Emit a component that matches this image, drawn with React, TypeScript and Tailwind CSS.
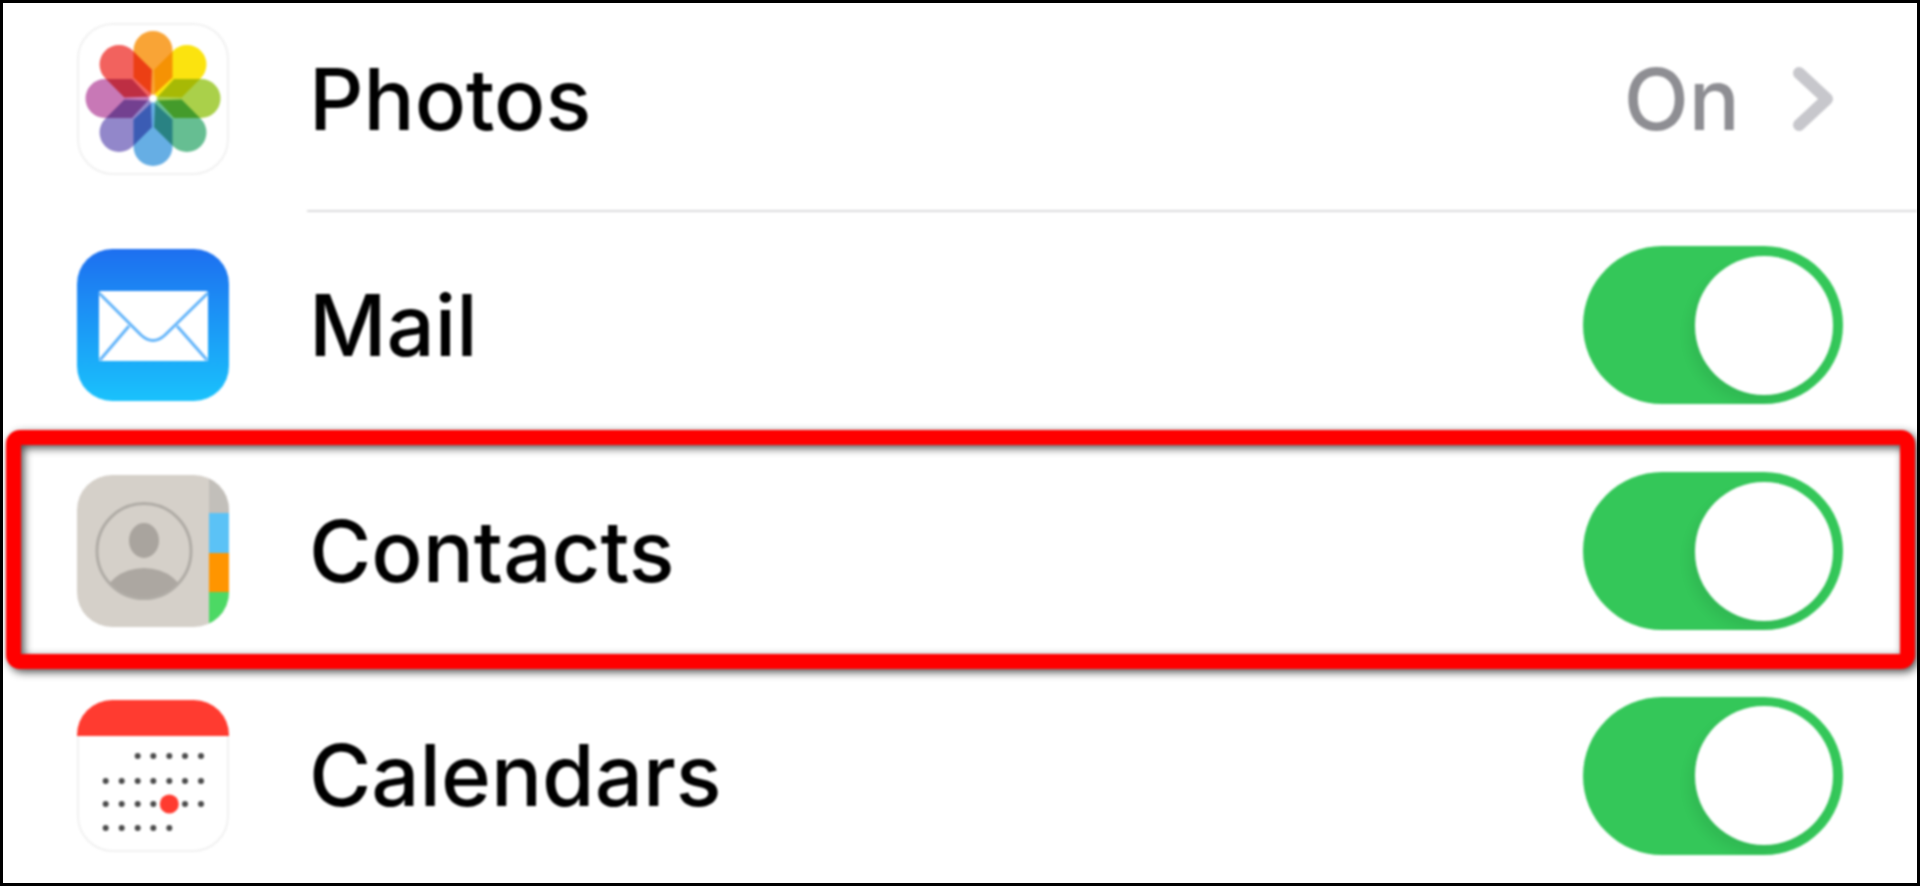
import * as React from 'react';

const petals = [
    { angle: 0, color: '#f9a436' },
    { angle: 45, color: '#fbe30f' },
    { angle: 90, color: '#aad04a' },
    { angle: 135, color: '#66be92' },
    { angle: 180, color: '#66aee4' },
    { angle: 225, color: '#9287ca' },
    { angle: 270, color: '#c878b6' },
    { angle: 315, color: '#f2625e' },
];

function PhotosIcon() {
    return (
        <svg viewBox="0 0 152 152" className="w-[152px] h-[152px] shrink-0">
            <rect x="1" y="1" width="150" height="150" rx="35" fill="#fff" stroke="#f1f1f1" strokeWidth="2" />
            <g transform="translate(76 75.5)" className="isolate">
                {petals.map((petal) => (
                    <path
                        key={petal.angle}
                        d="M0 -3 L-19.5 -21 L-19.5 -48 A19.5 19.5 0 0 1 19.5 -48 L19.5 -21 Z"
                        fill={petal.color}
                        transform={`rotate(${petal.angle})`}
                        className="mix-blend-multiply"
                    />
                ))}
                <circle r="3.5" fill="#fff" />
            </g>
        </svg>
    );
}

function MailIcon() {
    return (
        <svg viewBox="0 0 152 152" className="w-[152px] h-[152px] shrink-0">
            <defs>
                <linearGradient id="mailBg" x1="0" y1="0" x2="0" y2="1">
                    <stop offset="0" stopColor="#1d6ff0" />
                    <stop offset="1" stopColor="#1ac2fc" />
                </linearGradient>
            </defs>
            <rect width="152" height="152" rx="35" fill="url(#mailBg)" />
            <rect x="22" y="42" width="109" height="70" rx="1.5" fill="#fff" />
            <g fill="none" stroke="#62b4fa" strokeWidth="3">
                <path d="M22 44 L64 86 Q76 97 88 86 L131 44" />
                <path d="M23 111 L52 77" />
                <path d="M130 111 L100 77" />
            </g>
        </svg>
    );
}

function ContactsIcon() {
    return (
        <svg viewBox="0 0 152 152" className="w-[152px] h-[152px] shrink-0">
            <defs>
                <clipPath id="contactsClip">
                    <rect width="152" height="152" rx="35" />
                </clipPath>
                <clipPath id="faceClip">
                    <ellipse cx="67" cy="76" rx="46" ry="46.5" />
                </clipPath>
            </defs>
            <g clipPath="url(#contactsClip)">
                <rect width="152" height="152" fill="#d5d0c9" />
                <rect x="132" width="20" height="38" fill="#c2bfba" />
                <rect x="132" y="38" width="20" height="40" fill="#5bc2f6" />
                <rect x="132" y="78" width="20" height="39" fill="#ff9500" />
                <rect x="132" y="117" width="20" height="35" fill="#4cd964" />
            </g>
            <ellipse cx="67" cy="76" rx="47" ry="47.5" fill="none" stroke="#b0aca6" strokeWidth="3" />
            <ellipse cx="67" cy="65.5" rx="15" ry="17.5" fill="#a9a49e" />
            <ellipse cx="67" cy="126" rx="41" ry="33" fill="#aca7a1" clipPath="url(#faceClip)" />
        </svg>
    );
}

const calendarDots = [
    [60.7, 56], [76.3, 56], [92.3, 56], [108, 56], [124, 56],
    [28.7, 81], [44.7, 81], [60.7, 81], [76.3, 81], [92.3, 81], [108, 81], [124, 81],
    [28.7, 104], [44.7, 104], [60.7, 104], [76.3, 104], [108, 104], [124, 104],
    [28.7, 128], [44.7, 128], [60.7, 128], [76.3, 128], [92.3, 128],
];

function CalendarIcon() {
    return (
        <svg viewBox="0 0 152 152" className="w-[152px] h-[152px] shrink-0">
            <defs>
                <clipPath id="calendarClip">
                    <rect width="152" height="152" rx="35" />
                </clipPath>
            </defs>
            <rect x="1" y="1" width="150" height="150" rx="35" fill="#fff" stroke="#f1f1f1" strokeWidth="2" />
            <rect width="152" height="36" fill="#ff3b30" clipPath="url(#calendarClip)" />
            {calendarDots.map(([cx, cy]) => (
                <circle key={`${cx}-${cy}`} cx={cx} cy={cy} r="3" fill="#4a4a4a" />
            ))}
            <circle cx="92.3" cy="104" r="9.5" fill="#ff3b30" />
        </svg>
    );
}

function Toggle() {
    return (
        <div className="w-[260px] h-[158px] rounded-full bg-[#34c759] flex items-center justify-end pr-[10px] overflow-hidden shrink-0">
            <div className="w-[138px] h-[139px] rounded-full bg-white shadow-[-6px_8px_12px_rgba(0,0,0,0.07)]" />
        </div>
    );
}

function Label({ children }: { children: React.ReactNode }) {
    return <span className="ml-[80px] text-[85px] font-medium leading-none text-black">{children}</span>;
}

export default function App() {
    return (
        <div className="h-[886px] border-[3px] border-black bg-white font-['Inter',sans-serif] overflow-hidden">
            <div className="h-full flex flex-col blur-[1px]">
                {/* Photos */}
                <div className="h-[192px] shrink-0 flex items-center justify-between pl-[74px] pr-[84px]">
                    <div className="flex items-center">
                        <PhotosIcon />
                        <Label>Photos</Label>
                    </div>
                    <div className="flex items-center gap-[53px]">
                        <span className="text-[85px] font-medium leading-none text-[#8e8e93]">On</span>
                        <svg viewBox="0 0 40 64" className="w-[40px] h-[64px]">
                            <path d="M6 6 L34 32 L6 58" fill="none" stroke="#c7c7cc" strokeWidth="12" strokeLinecap="round" strokeLinejoin="round" />
                        </svg>
                    </div>
                </div>

                <div className="mt-[15px] ml-[304px] h-[2px] shrink-0 bg-[#dcdcde]" />

                {/* Mail */}
                <div className="h-[226px] shrink-0 flex items-center justify-between pl-[74px] pr-[74px]">
                    <div className="flex items-center">
                        <MailIcon />
                        <Label>Mail</Label>
                    </div>
                    <Toggle />
                </div>

                {/* Contacts, highlighted */}
                <div className="relative h-[226px] shrink-0 flex items-center justify-between pl-[74px] pr-[74px]">
                    <div className="flex items-center">
                        <ContactsIcon />
                        <Label>Contacts</Label>
                    </div>
                    <Toggle />
                    <div className="absolute -top-[8px] -bottom-[5px] left-[3px] right-[2px] rounded-[14px] border-[15px] border-[#ff0000] drop-shadow-[3px_3px_4px_rgba(0,0,0,0.7)]" />
                </div>

                {/* Calendars */}
                <div className="flex-1 flex items-center justify-between pt-[4px] pl-[74px] pr-[74px]">
                    <div className="flex items-center">
                        <CalendarIcon />
                        <Label>Calendars</Label>
                    </div>
                    <Toggle />
                </div>
            </div>
        </div>
    );
}
